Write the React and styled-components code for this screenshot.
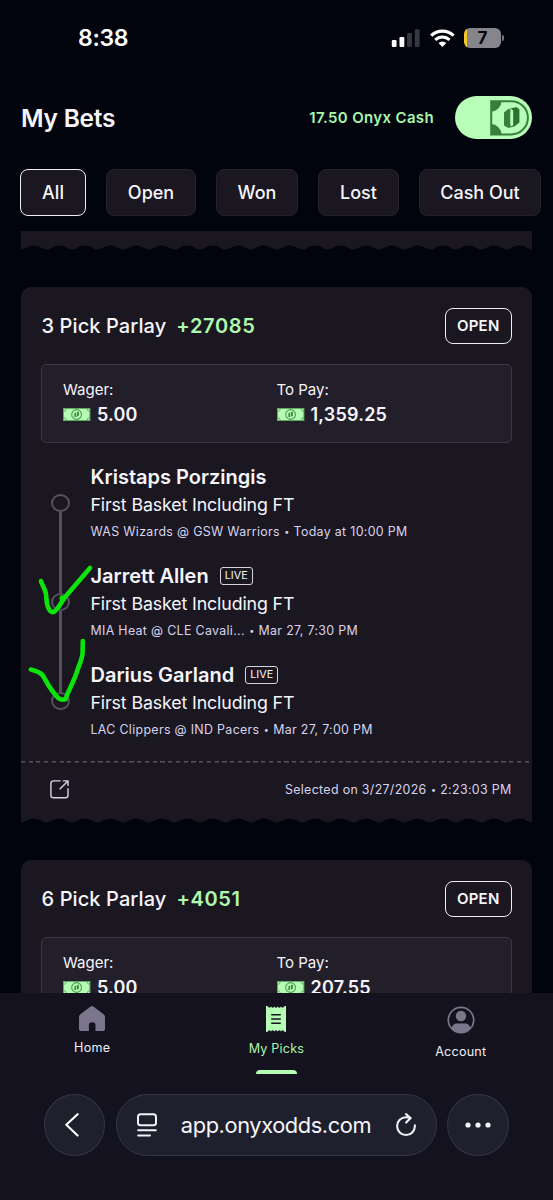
import React from "react";
import styled, { createGlobalStyle } from "styled-components";

const GlobalStyle = createGlobalStyle`
  * {
    box-sizing: border-box;
  }
  body {
    margin: 0;
    background: #01040d;
    color: #f6f5fa;
    font-family: Inter, "Liberation Sans", sans-serif;
  }
  button {
    font-family: inherit;
    color: inherit;
    padding: 0;
  }
  svg {
    display: block;
    flex: none;
  }
`;

const filters = [
  { label: "All", width: 66 },
  { label: "Open", width: 90 },
  { label: "Won", width: 82 },
  { label: "Lost", width: 81 },
  { label: "Cash Out", width: 122 },
];

const legs = [
  {
    player: "Kristaps Porzingis",
    game: "WAS Wizards @ GSW Warriors",
    time: "Today at 10:00 PM",
  },
  {
    player: "Jarrett Allen",
    live: true,
    game: "MIA Heat @ CLE Cavali...",
    time: "Mar 27, 7:30 PM",
  },
  {
    player: "Darius Garland",
    live: true,
    game: "LAC Clippers @ IND Pacers",
    time: "Mar 27, 7:00 PM",
  },
];

const Signal = () => (
  <svg width="29" height="18" viewBox="0 0 29 18">
    <rect x="0.8" y="11" width="4.8" height="7" rx="1.2" fill="#fff" />
    <rect x="8.5" y="8" width="4.8" height="10" rx="1.2" fill="#fff" />
    <rect x="16.1" y="4" width="4.8" height="14" rx="1.2" fill="#37393f" />
    <rect x="23.8" y="0.3" width="4.8" height="17.7" rx="1.2" fill="#37393f" />
  </svg>
);

const Wifi = () => (
  <svg width="25" height="18" viewBox="0 0 25 18" fill="none" stroke="#fff">
    <path d="M1.2 6.6C7.6.5 17.2.5 23.6 6.6" strokeWidth="3.3" />
    <path d="M5.2 10.9C9.4 7 15.4 7 19.6 10.9" strokeWidth="3.1" />
    <path d="M8.5 14.1Q12.4 10.9 16.3 14.1L12.9 17.5Q12.4 17.9 11.9 17.5Z" fill="#fff" stroke="none" />
  </svg>
);

const ToggleNote = () => (
  <svg width="42" height="36" viewBox="0 0 42 36">
    <path d="M1.2 1.2H21.3A16.6 16.6 0 0 1 21.3 34.4H1.2Z" fill="none" stroke="#37803c" strokeWidth="2" />
    <path d="M1 1H11.5A10.5 10.5 0 0 1 1 11.5ZM1 34.6V24.1A10.5 10.5 0 0 1 11.5 34.6Z" fill="#37803c" />
    <path d="M14 12.6L17.6 9.4 20.4 8.4V25.4L22 26.6 18.6 28 14 25.4Z" fill="#37803c" />
    <path d="M20.4 8.6L26.3 6.9 29.4 9.2V22.6L24.7 26.2 20 27.8 23.2 25V10.6Z" fill="#2c7132" />
    <path d="M20.6 12.2L23 11.2V23.4L20.6 24.6Z" fill="#b8fdb8" />
  </svg>
);

const Cash = () => (
  <svg width="28" height="13" viewBox="0 0 28 13">
    <rect x="0.5" y="0.5" width="26.4" height="12" fill="#b6fbb4" stroke="#5dab60" />
    <path d="M1 3.4Q3 3 3.2 1M1 9.6Q3 10 3.2 12M26.4 3.4Q24.4 3 24.2 1M26.4 9.6Q24.4 10 24.2 12" fill="none" stroke="#5dab60" />
    <circle cx="13.6" cy="6.5" r="4.9" fill="none" stroke="#4f9c53" strokeWidth="1.1" />
    <path d="M11.4 5.3L13.2 4.3V8.9L11.4 9ZM14 4L15.9 3.7V7.7L14 8.8Z" fill="#3f8a44" />
  </svg>
);

const Share = () => (
  <svg width="19" height="19" viewBox="0 0 19 19" fill="none" stroke="#d9d3ea" strokeWidth="1.4">
    <path d="M10.6.9H3.5Q.9.9.9 3.5V15.2Q.9 17.8 3.5 17.8H15.4Q18 17.8 18 15.2V8.2" />
    <path d="M9.7 9.2L17.9.9M12.9.9H18V6" />
  </svg>
);

// torn ticket edge, 20 scallops across the card
const Wave = () => {
  const step = 25.575;
  let d = "M0 0V4.6";
  for (let i = 0; i < 20; i++) {
    const x = i * step;
    d += `C${x + 5} 4 ${x + 7} 0.5 ${x + step / 2} 0.5S${x + step - 5} 4 ${x + step} 4.6`;
  }
  return (
    <svg width="511.5" height="5" viewBox="0 0 511.5 5">
      <path d={d + "V0Z"} fill="#1b1721" />
    </svg>
  );
};

const Home = () => (
  <svg width="26" height="25" viewBox="0 0 26 25">
    <path
      d="M11.3.7Q13-.5 14.7.7L24.6 8.3Q26 9.4 26 11.2V23Q26 25 24 25H16.5V19.5Q16.5 16.2 13.2 16.2T9.9 19.5V25H2Q0 25 0 23V11.2Q0 9.4 1.4 8.3Z"
      fill="#7b768b"
    />
  </svg>
);

const Receipt = () => (
  <svg width="20" height="26" viewBox="0 0 20 26">
    <path
      d="M0 0L1.7.3Q3.3 3 5 .5 6.7 3 8.3.5 10 3 11.7.5 13.3 3 15 .5 16.7 3 18.3.3L20 0V26L18.3 25.7Q16.7 23 15 25.5 13.3 23 11.7 25.5 10 23 8.3 25.5 6.7 23 5 25.5 3.3 23 1.7 25.7L0 26Z"
      fill="#b6fdb5"
    />
    <path d="M5.2 8.7H14.8M5.2 13H14.8M5.2 17.3H14.8" stroke="#161522" strokeWidth="1.5" />
  </svg>
);

const Account = () => (
  <svg width="28" height="28" viewBox="0 0 28 28">
    <circle cx="14" cy="14" r="12.7" fill="none" stroke="#7b768b" strokeWidth="1.7" />
    <circle cx="14" cy="10" r="5.2" fill="#7b768b" />
    <path d="M4.5 22Q6 17.5 9.5 17.5H18.5Q22 17.5 23.5 22 20 27 14 27T4.5 22Z" fill="#7b768b" />
  </svg>
);

const Back = () => (
  <svg width="14" height="24" viewBox="0 0 14 24" fill="none" stroke="#fff" strokeWidth="2.1" strokeLinecap="round" strokeLinejoin="round">
    <path d="M12.6 1.2L1.3 11.8 12.6 22.6" />
  </svg>
);

const Reader = () => (
  <svg width="20" height="24" viewBox="0 0 20 24" fill="none" stroke="#f2f2f7" strokeWidth="2" strokeLinecap="round">
    <rect x="1" y="1.2" width="18" height="11" rx="2.5" />
    <path d="M1.2 17.2H18.8M1.2 22.5H13" />
  </svg>
);

const Reload = () => (
  <svg width="20" height="24" viewBox="0 0 20 24" fill="none" stroke="#f2f2f7" strokeWidth="2.1" strokeLinecap="round" strokeLinejoin="round">
    <path d="M14.5 5.1C13 4.3 11.5 4.2 10 4.2A8.9 8.9 0 1 0 18.9 13.1V12.3" />
    <path d="M10 1.1L14.5 5.1 10.2 9.6" />
  </svg>
);

const More = () => (
  <svg width="26" height="6" viewBox="0 0 26 6" fill="#f2f2f7">
    <circle cx="3" cy="3" r="2.6" />
    <circle cx="13" cy="3" r="2.6" />
    <circle cx="23" cy="3" r="2.6" />
  </svg>
);

// freehand ticks over the last two legs
const Marks = () => (
  <MarkLayer width="90" height="150" viewBox="20 560 90 150" fill="none" stroke="#0be50b" strokeWidth="4.6" strokeLinecap="round" strokeLinejoin="round">
    <path d="M41 581C42 585 45 589 45.8 593 46.6 598 46.2 602 47.6 606 48.8 610 51.5 613.5 54.5 611.5 59 608 62 600 68.5 593L90 568M61.8 597.5L62 600" />
    <path d="M30.8 669.5C35 670.5 39 671.5 42 674.5 45.5 679 47 684 51 689 54 693 56.5 697 59.5 698.8 62 699.8 64 699.7 65.5 699.3 68 691 74 681 76.5 673 78.5 666 82 660 82.6 653L82.8 641" />
  </MarkLayer>
);

const TicketHead = ({ picks, odds, wager, pay }) => (
  <>
    <TicketTop>
      <TicketTitle>{picks} Pick Parlay</TicketTitle>
      <Odds>{odds}</Odds>
      <Status>OPEN</Status>
    </TicketTop>
    <Stakes>
      <Stake>
        <StakeLabel>Wager:</StakeLabel>
        <Amount>
          <Cash />
          {wager}
        </Amount>
      </Stake>
      <Stake>
        <StakeLabel>To Pay:</StakeLabel>
        <Amount>
          <Cash />
          {pay}
        </Amount>
      </Stake>
    </Stakes>
  </>
);

const App = () => {
  return (
    <Screen>
      <GlobalStyle />
      <StatusBar>
        <Time>8:38</Time>
        <StatusIcons>
          <Signal />
          <Wifi />
          <Battery>7</Battery>
        </StatusIcons>
      </StatusBar>

      <Header>
        <Title>My Bets</Title>
        <Balance>17.50 Onyx Cash</Balance>
        <Toggle>
          <ToggleNote />
        </Toggle>
      </Header>

      <Filters>
        {filters.map((f, i) => (
          <Filter key={f.label} $width={f.width} $active={i === 0}>
            {f.label}
          </Filter>
        ))}
      </Filters>

      <List>
        <PreviousTicket />
        <Wave />

        <Ticket>
          <TicketHead picks={3} odds="+27085" wager="5.00" pay="1,359.25" />
          <Legs>
            {legs.map((leg, i) => (
              <Leg key={leg.player}>
                <Rail>
                  <RailTop $hidden={i === 0} />
                  <Dot />
                  <RailBottom $hidden={i === legs.length - 1} />
                </Rail>
                <div>
                  <Player>
                    {leg.player}
                    {leg.live && <Live>LIVE</Live>}
                  </Player>
                  <Market>First Basket Including FT</Market>
                  <Info>
                    {leg.game} <Bullet>•</Bullet> {leg.time}
                  </Info>
                </div>
              </Leg>
            ))}
          </Legs>
          <TicketFooter>
            <Share />
            <Info>
              Selected on 3/27/2026 <Bullet>•</Bullet> 2:23:03 PM
            </Info>
          </TicketFooter>
        </Ticket>
        <Wave />

        <Ticket>
          <TicketHead picks={6} odds="+4051" wager="5.00" pay="207.55" />
        </Ticket>
      </List>

      <Nav>
        <NavItem $gap={7}>
          <Home />
          Home
        </NavItem>
        <NavItem $gap={7} $active>
          <Receipt />
          My Picks
          <Indicator />
        </NavItem>
        <NavItem $gap={8}>
          <Account />
          Account
        </NavItem>
      </Nav>

      <BrowserBar>
        <RoundButton $shift={4}>
          <Back />
        </RoundButton>
        <Address>
          <Reader />
          <Url>app.onyxodds.com</Url>
          <Reload />
        </Address>
        <RoundButton $shift={0}>
          <More />
        </RoundButton>
      </BrowserBar>
      <Marks />
    </Screen>
  );
};

const Screen = styled.div`
  position: relative;
  display: flex;
  flex-direction: column;
  width: 553px;
  height: 1200px;
  overflow: hidden;
  background: #01040d;
`;

const MarkLayer = styled.svg`
  position: absolute;
  left: 20px;
  top: 560px;
  pointer-events: none;
`;

const StatusBar = styled.div`
  display: flex;
  justify-content: space-between;
  align-items: center;
  height: 75px;
  padding: 0 52px 0 78px;
`;

const Time = styled.div`
  font-size: 23px;
  font-weight: 600;
  letter-spacing: -0.3px;
  color: #fff;
`;

const StatusIcons = styled.div`
  display: flex;
  align-items: center;
  gap: 9.5px;
`;

const Battery = styled.div`
  position: relative;
  width: 37px;
  height: 20px;
  border-radius: 6px;
  background: linear-gradient(90deg, #f5c72e 3px, #85858b 3px);
  color: #08080c;
  font-size: 17px;
  font-weight: 700;
  line-height: 20px;
  text-align: center;

  &::after {
    content: "";
    position: absolute;
    right: -3px;
    top: 7px;
    width: 2px;
    height: 6px;
    border-radius: 0 3px 3px 0;
    background: #77777d;
  }
`;

const Header = styled.header`
  display: flex;
  align-items: center;
  height: 43px;
  margin-top: 21px;
  padding: 0 21px;
`;

const Title = styled.h1`
  margin: 0 auto 0 0;
  font-size: 24.5px;
  font-weight: 600;
  letter-spacing: -0.25px;
`;

const Balance = styled.div`
  margin-right: 21px;
  font-size: 15px;
  font-weight: 600;
  letter-spacing: 0.35px;
  color: #a9f5aa;
`;

const Toggle = styled.button`
  display: flex;
  align-items: center;
  justify-content: flex-end;
  width: 77px;
  height: 43px;
  border: 0;
  border-radius: 22px;
  background: #b8fdb8;
`;

const Filters = styled.div`
  display: flex;
  gap: 20px;
  height: 62px;
  margin-top: 30px;
  padding-left: 20px;
`;

const Filter = styled.button`
  flex: none;
  width: ${(p) => p.$width}px;
  height: 47px;
  border: ${(p) => (p.$active ? "1.5px solid #eeedf2" : "1px solid #24212b")};
  border-radius: 8px;
  background: #1b1721;
  font-size: 18px;
  font-weight: 500;
`;

const List = styled.main`
  flex: 1;
  min-height: 0;
  overflow: hidden;
  padding: 0 21px 0 20.5px;
`;

const PreviousTicket = styled.div`
  height: 14px;
  background: #1b1721;
`;

const Ticket = styled.section`
  margin-top: 37px;
  border-radius: 10px 10px 0 0;
  background: #1b1721;
`;

const TicketTop = styled.div`
  display: flex;
  align-items: center;
  padding: 20.5px 20.5px 20.5px 21px;
`;

const TicketTitle = styled.h2`
  margin: 0;
  font-size: 20px;
  font-weight: 500;
  letter-spacing: 0.1px;
`;

const Odds = styled.div`
  margin-left: 10px;
  font-size: 20px;
  font-weight: 600;
  letter-spacing: 0.65px;
  color: #b0f9ae;
`;

const Status = styled.div`
  width: 66.5px;
  height: 36px;
  margin-left: auto;
  border: 1.5px solid #eeedf2;
  border-radius: 8px;
  font-size: 15px;
  font-weight: 600;
  letter-spacing: 0.2px;
  line-height: 34px;
  text-align: center;
`;

const Stakes = styled.div`
  display: grid;
  grid-template-columns: 213.5px 1fr;
  height: 79px;
  margin: 0 20.5px;
  padding: 14px 21px;
  border: 1.5px solid #3a3743;
  border-radius: 5px;
  background: #231f2a;
`;

const Stake = styled.div`
  display: flex;
  flex-direction: column;
`;

const StakeLabel = styled.div`
  font-size: 15px;
  line-height: 22px;
`;

const Amount = styled.div`
  display: flex;
  align-items: center;
  gap: 6px;
  font-size: 18px;
  font-weight: 600;
  line-height: 27px;
  letter-spacing: 0.2px;
`;

const Legs = styled.div`
  margin: 20px 20.5px 1px;
`;

const Leg = styled.div`
  display: flex;
  height: 99px;
`;

const Rail = styled.div`
  display: flex;
  flex-direction: column;
  align-items: center;
  width: 19px;
  margin: 0 20.5px 0 10px;
`;

const RailLine = styled.div`
  width: 3px;
  background: #55525e;
  visibility: ${(p) => (p.$hidden ? "hidden" : "visible")};
`;

const RailTop = styled(RailLine)`
  height: 31px;
`;

const RailBottom = styled(RailLine)`
  flex: 1;
`;

const Dot = styled.div`
  width: 19px;
  height: 18px;
  border: 2px solid #55525e;
  border-radius: 50%;
`;

const Player = styled.div`
  display: flex;
  align-items: center;
  font-size: 20px;
  font-weight: 600;
  line-height: 28px;
`;

const Live = styled.span`
  width: 33px;
  height: 18px;
  margin-left: 11px;
  border: 1.5px solid #d6d4dc;
  border-radius: 3px;
  font-size: 10.8px;
  font-weight: 400;
  line-height: 16px;
  text-align: center;
`;

const Market = styled.div`
  font-size: 17.8px;
  line-height: 28px;
  letter-spacing: -0.13px;
`;

const Info = styled.div`
  padding-top: 1px;
  font-size: 12.4px;
  line-height: 24px;
  letter-spacing: 0.33px;
  color: #d8d4ee;
`;

const Bullet = styled.span`
  display: inline-block;
  width: 6px;
  font-size: 9px;
  line-height: 12px;
  letter-spacing: 0;
  text-align: center;
  vertical-align: 1px;
`;

const TicketFooter = styled.div`
  display: flex;
  align-items: center;
  justify-content: space-between;
  height: 57px;
  padding: 0 20.5px 0 29px;
  background: repeating-linear-gradient(90deg, #55525e 0 4px, transparent 4px 7.75px) top / 100% 1.5px no-repeat;
`;

const Nav = styled.nav`
  display: grid;
  grid-template-columns: repeat(3, 184.3px);
  height: 82px;
  background: #13121e;
`;

const NavItem = styled.div`
  display: flex;
  flex-direction: column;
  align-items: center;
  gap: ${(p) => p.$gap}px;
  padding-top: 13px;
  font-size: 12.6px;
  line-height: 20px;
  letter-spacing: 0.2px;
  color: ${(p) => (p.$active ? "#a9f5aa" : "#f0eff5")};
`;

const Indicator = styled.div`
  width: 41px;
  height: 4px;
  margin-top: 3.5px;
  border-radius: 4px 4px 0 0;
  background: #b6fdb5;
`;

const BrowserBar = styled.div`
  display: flex;
  justify-content: center;
  gap: 10.5px;
  height: 125px;
  padding: 19px 1px 0 0;
  background: #13121e;
`;

const RoundButton = styled.button`
  display: flex;
  align-items: center;
  justify-content: center;
  width: 61.5px;
  height: 62px;
  padding-right: ${(p) => p.$shift}px;
  border: 1px solid #35344a;
  border-radius: 50%;
  background: #1e202d;
`;

const Address = styled.div`
  display: flex;
  align-items: center;
  width: 321px;
  height: 62px;
  padding: 0 20px;
  border: 1px solid #35344a;
  border-radius: 31px;
  background: #1e202d;
`;

const Url = styled.div`
  flex: 1;
  text-align: center;
  font-size: 21.8px;
  letter-spacing: -0.4px;
`;

export default App;
